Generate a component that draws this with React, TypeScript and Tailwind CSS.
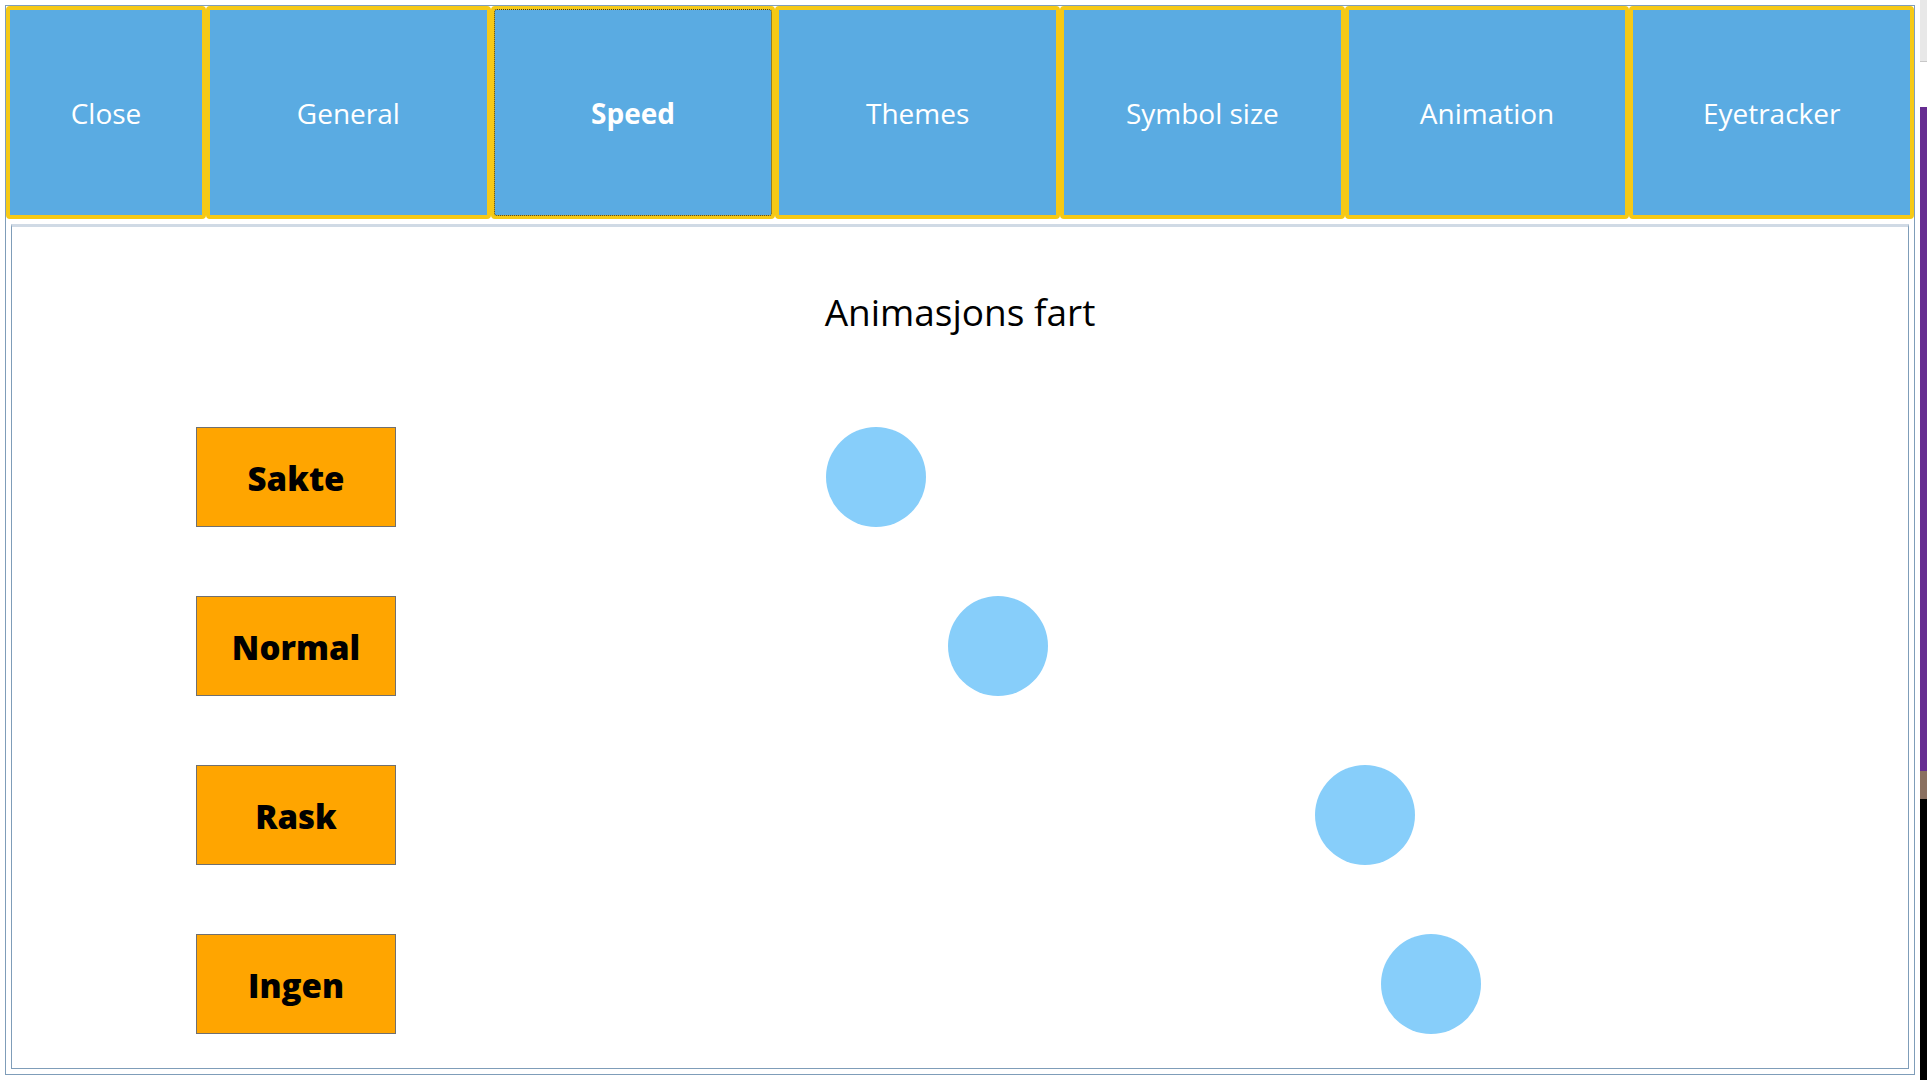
import React from "react";

const tabs = ["Close", "General", "Speed", "Themes", "Symbol size", "Animation", "Eyetracker"];

const rows = [
  { label: "Sakte", ml: "ml-[430px]" },
  { label: "Normal", ml: "ml-[552px]" },
  { label: "Rask", ml: "ml-[919px]" },
  { label: "Ingen", ml: "ml-[985px]" },
];

export default function App() {
  return (
    <div
      className="flex w-[1927px] h-[1080px] bg-white overflow-hidden"
      style={{ fontFamily: '"Open Sans", "Noto Sans", sans-serif' }}
    >
      <div className="w-[1920px] h-full p-[5px] shrink-0">
        <div className="h-full border border-[#7f9db9] flex flex-col">
          <div className="flex h-[213px] shrink-0">
            {tabs.map((t) => {
              const active = t === "Speed";
              return (
                <div
                  key={t}
                  className={
                    (t === "Close" ? "w-[200px] shrink-0 " : "flex-1 ") +
                    "relative h-full rounded-[4px] border-[4px] border-[#f6c915] bg-[#5aabe2] flex items-center justify-center text-white text-[28px]"
                  }
                >
                  {active && (
                    <div className="absolute inset-[-1px] rounded-[3px] border border-dotted border-[#333333]" />
                  )}
                  <span className={active ? "font-bold" : "font-normal"}>{t}</span>
                </div>
              );
            })}
          </div>
          <div className="mt-[5px] mx-[5px] mb-[5px] flex-1 border border-[#7f9db9] border-t-[3px] border-t-[#d0dae5] flex flex-col">
            <div className="pt-[66px] flex justify-center">
              <span className="text-[37px] leading-none text-black">Animasjons fart</span>
            </div>
            <div className="flex flex-col gap-[69px] pl-[184px] mt-[97px]">
              {rows.map((r) => (
                <div key={r.label} className="flex items-start h-[100px]">
                  <div className="w-[200px] h-[100px] shrink-0 bg-[#ffa500] border border-[#707070] flex items-center justify-center pt-[4px] text-black font-extrabold text-[33px]">
                    {r.label}
                  </div>
                  <div className={r.ml + " w-[100px] h-[100px] shrink-0 rounded-full bg-[#87cefa]"} />
                </div>
              ))}
            </div>
          </div>
        </div>
      </div>
      <div className="flex-1 flex flex-col h-full">
        <div className="h-[62px] bg-[#e8e8e8] border-b border-[#c8c8c8]" />
        <div className="h-[45px] bg-white" />
        <div className="h-[664px] bg-[#662d91]" />
        <div className="h-[28px] bg-[#8a7060]" />
        <div className="flex-1 bg-black" />
      </div>
    </div>
  );
}
